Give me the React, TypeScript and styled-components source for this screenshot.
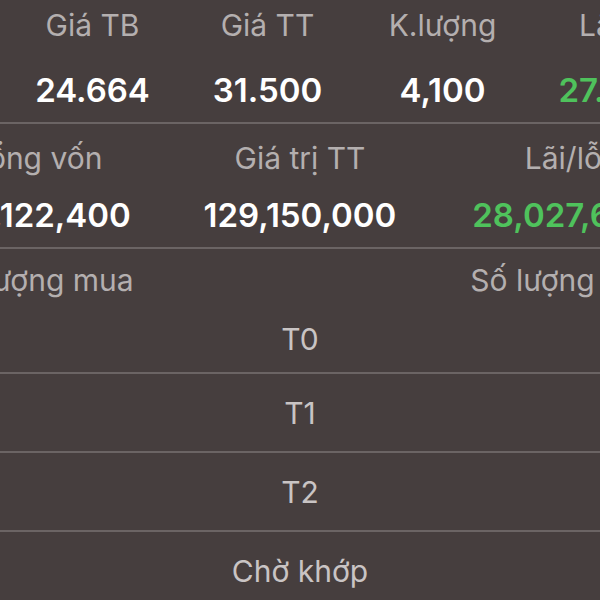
import React from "react";
import styled, { createGlobalStyle } from "styled-components";

const GlobalStyle = createGlobalStyle`
  html, body { margin: 0; padding: 0; background: #463e3e; }
  body { font-family: "Inter", "Roboto", "Noto Sans", sans-serif; }
`;

const Viewport = styled.div`
  width: 600px;
  height: 600px;
  overflow: hidden;
  background: #463e3e;
`;

const Sheet = styled.div`
  width: 790px;
  margin-left: -95px;
`;

const Section = styled.div<{ $pt: number; $gap: number; $pb: number }>`
  padding: ${(p) => p.$pt}px 0 ${(p) => p.$pb}px;
  display: flex;
  flex-direction: column;
  gap: ${(p) => p.$gap}px;
  border-bottom: 2px solid #6b6464;
`;

const Grid = styled.div<{ $cols: string }>`
  display: grid;
  grid-template-columns: ${(p) => p.$cols};
`;

const Label = styled.div`
  font-size: 30px;
  line-height: 34px;
  color: #b4afaf;
  text-align: center;
  white-space: nowrap;
`;

const Value = styled.div<{ $green?: boolean }>`
  font-size: 33px;
  line-height: 40px;
  font-weight: 600;
  color: ${(p) => (p.$green ? "#4fc25c" : "#ffffff")};
  text-align: center;
  white-space: nowrap;
`;

const StatusText = styled.div`
  font-size: 30px;
  line-height: 34px;
  color: #c9c4c4;
  text-align: center;
`;

const StatusRow = styled.div`
  height: 77px;
  display: flex;
  align-items: center;
  justify-content: center;
  border-bottom: 2px solid #6b6464;
`;

const row1Cols = "100px repeat(4, 175px)";
const row2Cols = "repeat(3, 1fr)";

export default function App() {
  const top = [
    { label: "Giá TB", value: "24.664" },
    { label: "Giá TT", value: "31.500" },
    { label: "K.lượng", value: "4,100" },
    { label: "Lãi/lỗ", value: "27.72%", green: true },
  ];
  const mid = [
    { label: "Tổng vốn", value: "101,122,400" },
    { label: "Giá trị TT", value: "129,150,000" },
    { label: "Lãi/lỗ", value: "28,027,600", green: true },
  ];
  return (
    <>
      <GlobalStyle />
      <Viewport>
        <Sheet>
          <Section $pt={8} $gap={28} $pb={12}>
            <Grid $cols={row1Cols}>
              <div />
              {top.map((c) => (
                <Label key={c.label}>{c.label}</Label>
              ))}
            </Grid>
            <Grid $cols={row1Cols}>
              <div />
              {top.map((c) => (
                <Value key={c.label} $green={c.green}>
                  {c.value}
                </Value>
              ))}
            </Grid>
          </Section>
          <Section $pt={17} $gap={20} $pb={12}>
            <Grid $cols={row2Cols}>
              {mid.map((c) => (
                <Label key={c.label}>{c.label}</Label>
              ))}
            </Grid>
            <Grid $cols={row2Cols}>
              {mid.map((c) => (
                <Value key={c.label} $green={c.green}>
                  {c.value}
                </Value>
              ))}
            </Grid>
          </Section>
          <Section $pt={14} $gap={25} $pb={16}>
            <Grid $cols={row2Cols}>
              <Label>Số lượng mua</Label>
              <div />
              <Label>Số lượng bán</Label>
            </Grid>
            <StatusText>T0</StatusText>
          </Section>
          <StatusRow>
            <StatusText>T1</StatusText>
          </StatusRow>
          <StatusRow>
            <StatusText>T2</StatusText>
          </StatusRow>
          <StatusRow>
            <StatusText>Chờ khớp</StatusText>
          </StatusRow>
        </Sheet>
      </Viewport>
    </>
  );
}
